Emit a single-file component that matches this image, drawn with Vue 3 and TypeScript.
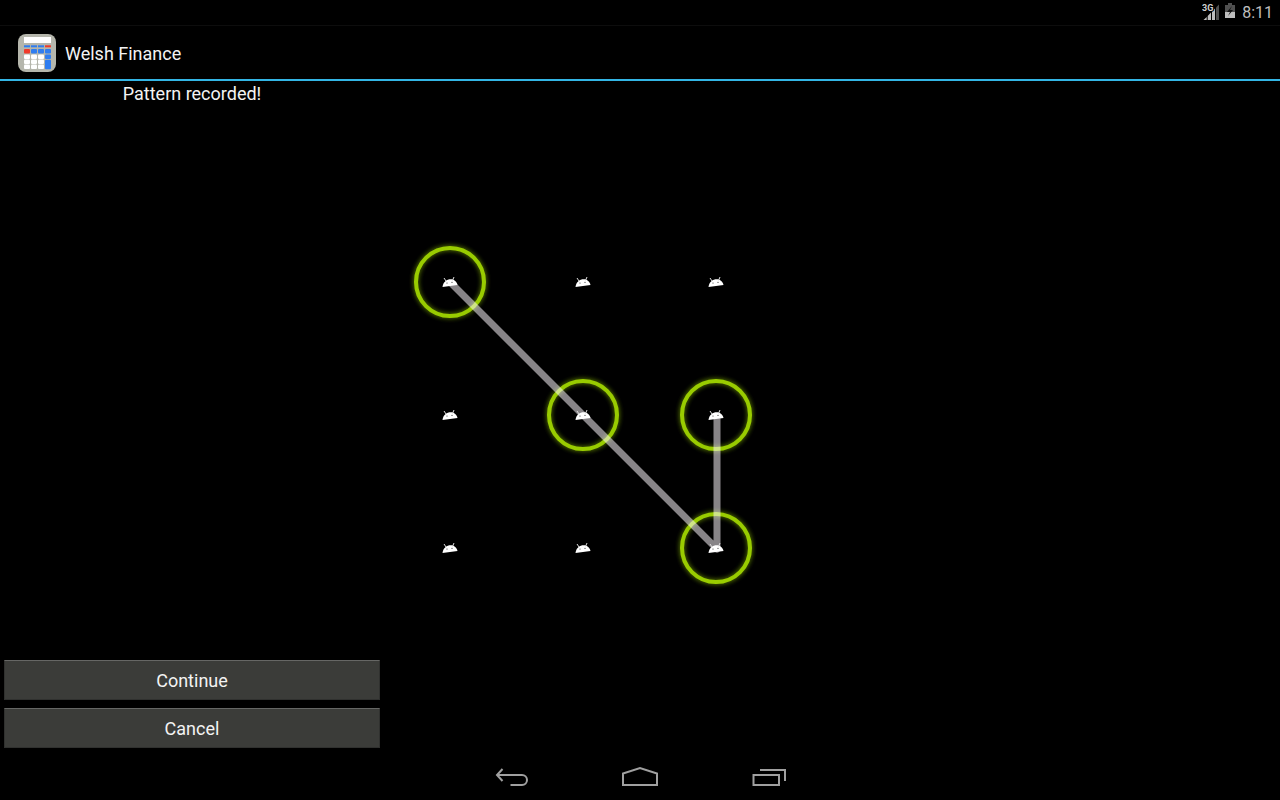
<script setup lang="ts">
interface Point {
  x: number
  y: number
}

const step = 133
const margin = 66
const nodes: Point[] = Array.from({ length: 9 }, (_, i) => ({
  x: margin + (i % 3) * step,
  y: margin + Math.floor(i / 3) * step,
}))

const pattern: number[] = [0, 4, 8, 5]
const selected: Point[] = pattern.map((i) => nodes[i])
const trail: string = selected.map((p) => `${p.x + 1},${p.y + 1}`).join(' ')

const columns: number[] = [6, 13, 20, 27]
const rows: number[] = [20, 25, 30]
</script>

<template>
  <div class="screen">
    <header class="status">
      <svg class="signal" width="18" height="20" viewBox="0 0 18 20" aria-label="3G signal">
        <path d="M1.500 20L4.700 17V20zM5.700 20V16L9 12.500V20zM10 20V11.500L13 8.500V20z" fill="#bebebe" />
        <path d="M14 20V7.500L17 4.500V20z" fill="#505050" />
        <text x="0" y="11">3G</text>
      </svg>
      <svg width="12" height="17" viewBox="1 0 12 17" aria-label="Battery charging">
        <path d="M1 3h3v-2h4v2h3v7h-10z" fill="#505050" />
        <path d="M1 10h10v6h-10z" fill="#bebebe" />
        <path d="M8 4l-5 6h3l-2 4 5-6h-3z" fill="#111" />
      </svg>
      <time class="clock">8:11</time>
    </header>

    <div class="action-bar">
      <svg width="38" height="38" viewBox="0 0 38 38" aria-hidden="true">
        <rect width="38" height="38" rx="8" fill="#b5b6ac" />
        <rect x="6" y="3" width="27" height="6" fill="#fff" />
        <g v-for="(x, i) in columns" :key="x">
          <rect :x="x" y="11.300" width="6" height="2" :fill="i === 3 ? '#f03a2a' : '#2f7df0'" />
          <rect :x="x" y="15" width="6" height="4.500" rx="1" :fill="i === 0 ? '#f03a2a' : '#2f7df0'" />
          <template v-if="i < 3">
            <rect v-for="y in rows" :key="y" :x="x" :y="y + 0.5" width="6" height="4.400" rx="1" fill="#fff" />
          </template>
        </g>
        <rect x="27" y="20.500" width="6" height="4.400" rx="1" fill="#2f7df0" />
        <rect x="27" y="25.700" width="6" height="9.500" rx="1" fill="#2f7df0" />
      </svg>
      <h1>Welsh Finance</h1>
    </div>

    <main class="content">
      <section class="panel">
        <p>Pattern recorded!</p>
        <div class="actions">
          <button type="button">Continue</button>
          <button type="button">Cancel</button>
        </div>
      </section>
      <svg class="pattern" width="398" height="398" viewBox="0 0 398 398" aria-label="Unlock pattern">
        <defs>
          <filter id="glow" x="-30%" y="-30%" width="160%" height="160%">
            <feGaussianBlur stdDeviation="2" />
          </filter>
          <g id="robot">
            <path d="M-7.500 5C-6.500 -4 5.500 -5.500 7.500 3z" fill="#fff" />
            <path d="M-4 -1L-6 -4M2.500 -1.500L4 -5" stroke="#ddd" stroke-width="1" />
            <circle cx="-3" cy="1" r="0.600" fill="#333" />
            <circle cx="2" cy="0.300" r="0.600" fill="#333" />
          </g>
        </defs>
        <g v-for="p in selected" :key="`${p.x}-${p.y}`" fill="none">
          <circle :cx="p.x" :cy="p.y" r="34" stroke="#4a6400" stroke-width="6" filter="url(#glow)" />
          <circle :cx="p.x" :cy="p.y" r="34" stroke="#99cc00" stroke-width="4" />
        </g>
        <polyline :points="trail" fill="none" stroke="#fffaff" stroke-width="7" stroke-opacity="0.53" stroke-linejoin="round" />
        <use v-for="p in nodes" :key="`${p.x}-${p.y}`" href="#robot" :x="p.x" :y="p.y" />
      </svg>
    </main>

    <nav class="nav">
      <button type="button" aria-label="Back">
        <svg width="48" height="48" viewBox="0 0 48 48">
          <path d="M14.500 17L9 23L14.500 29M9 23H34a5 5 0 0 1 0 10H22.500" />
        </svg>
      </button>
      <button type="button" aria-label="Home">
        <svg width="48" height="48" viewBox="0 0 48 48">
          <path d="M7 33V21.500L24 16L41 21.500V33z" />
        </svg>
      </button>
      <button type="button" aria-label="Recent apps">
        <svg width="48" height="48" viewBox="0 0 48 48">
          <path d="M9.500 23H35V33H9.500zM16 18H41V29" />
        </svg>
      </button>
    </nav>
  </div>
</template>

<style>
body {
  margin: 0;
  background: #000;
}
</style>

<style scoped>
.screen {
  display: flex;
  flex-direction: column;
  min-height: 100vh;
  background: #000;
  color: #f3f3f3;
  font-family: Roboto, "Liberation Sans", sans-serif;
  font-size: 18px;
}

.status {
  box-sizing: border-box;
  display: flex;
  justify-content: flex-end;
  height: 26px;
  padding-right: 7px;
  gap: 5px;
  border-bottom: 1px solid #0d0d0d;
  color: #bebebe;
}

.status svg {
  margin-top: 2px;
}

.status .signal {
  margin-top: 0;
}

.signal text {
  font-size: 9px;
  font-weight: 700;
  fill: #d0d0d0;
  stroke: #000;
  stroke-width: 2px;
  paint-order: stroke;
}

.clock {
  font-size: 16px;
  line-height: 25px;
}

.action-bar {
  display: flex;
  align-items: center;
  gap: 9px;
  height: 53px;
  padding-left: 18px;
  border-bottom: 2px solid #33b5e5;
}

h1 {
  margin: 0;
  padding-top: 2px;
  font-size: 18px;
  font-weight: 400;
  line-height: 24px;
}

.content {
  flex: 1;
  display: flex;
  align-items: center;
  padding-bottom: 4px;
}

.panel {
  align-self: stretch;
  box-sizing: border-box;
  width: 30%;
  padding: 0 4px;
  display: flex;
  flex-direction: column;
  justify-content: space-between;
}

.panel p {
  margin: 0;
  line-height: 26px;
  text-align: center;
}

.actions {
  display: flex;
  flex-direction: column;
  gap: 8px;
}

.actions button {
  height: 40px;
  padding: 0;
  border: 1px solid #30312f;
  border-top-color: #666765;
  background: #3b3c39;
  color: inherit;
  font: inherit;
}

.nav {
  display: flex;
  justify-content: center;
  height: 48px;
}

.nav button {
  width: 128px;
  padding: 0;
  border: 0;
  background: none;
}

.nav svg {
  display: block;
  margin: 0 auto;
  fill: none;
  stroke: #a0a0a0;
  stroke-width: 2;
}
</style>
